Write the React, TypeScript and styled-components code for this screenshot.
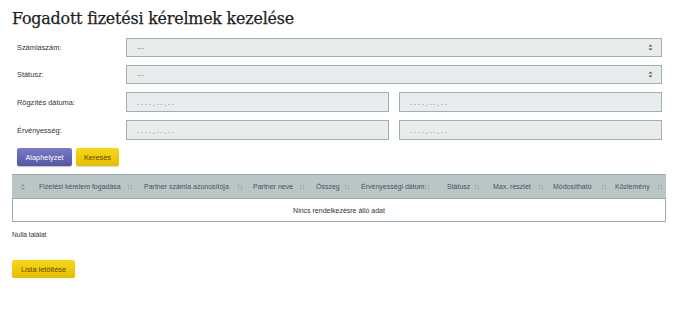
import React from "react";
import styled, { createGlobalStyle } from "styled-components";

const Global = createGlobalStyle`
  html, body { margin: 0; padding: 0; background: #fff; }
  body { font-family: "Liberation Sans", Arial, sans-serif; }
`;

const Page = styled.div`
  padding: 0 12px;
  width: 654px;
`;

const Title = styled.h1`
  margin: 0;
  padding-top: 9px;
  height: 29px;
  font-family: "DejaVu Serif", "Liberation Serif", serif;
  font-weight: normal;
  font-size: 15.9px;
  line-height: 20px;
  color: #1e1e1e;
  letter-spacing: -0.2px;
  -webkit-text-stroke: 0.25px #1e1e1e;
`;

const Form = styled.div`
  display: grid;
  grid-template-columns: 114px 1fr;
  row-gap: 8px;
  width: 650px;
  align-items: center;
`;

const Label = styled.div`
  padding-left: 5px;
  font-size: 7.4px;
  color: #333;
`;

const SelectBox = styled.div`
  height: 19px;
  box-sizing: border-box;
  border: 1px solid #9fb0ae;
  background: #e9ecec;
  display: flex;
  align-items: center;
  justify-content: space-between;
  padding: 0 8px 0 10px;
  font-size: 7px;
  color: #8a8a8a;
`;

const DatePair = styled.div`
  display: grid;
  grid-template-columns: 1fr 1fr;
  column-gap: 10px;
`;

const DateBox = styled.div`
  height: 20px;
  box-sizing: border-box;
  border: 1px solid #9fb0ae;
  background: #e9ecec;
  display: flex;
  align-items: center;
  padding: 3px 0 0 10px;
  font-size: 7px;
  letter-spacing: 1.6px;
  color: #b2babd;
  font-weight: bold;
`;

const Dot = styled.span<{ $c: string }>`
  color: ${(p) => p.$c};
`;

const ButtonRow = styled.div`
  display: flex;
  gap: 4px;
  margin: 8px 0 0 5px;
`;

const Button = styled.button<{ $variant: "blue" | "yellow"; $w: number }>`
  height: 18px;
  width: ${(p) => p.$w}px;
  border: none;
  border-radius: 2px;
  padding: 0;
  font-family: "Liberation Sans", Arial, sans-serif;
  font-size: 7.4px;
  cursor: pointer;
  background: ${(p) =>
    p.$variant === "blue"
      ? "linear-gradient(#7a7ac8, #5656a6)"
      : "linear-gradient(#f7d819, #e6bd00)"};
  color: ${(p) => (p.$variant === "blue" ? "#ffffff" : "#5e4800")};
  box-shadow: ${(p) =>
    p.$variant === "blue" ? "0 1px 1px rgba(0,0,0,0.25)" : "0 1px 1px rgba(0,0,0,0.15)"};
`;

const Table = styled.div`
  margin-top: 8px;
  border: 1px solid #9aabaa;
  width: 654px;
  box-sizing: border-box;
`;

const HeadRow = styled.div`
  display: flex;
  height: 23px;
  background: #b9c6c5;
  border-bottom: 1px solid #9aabaa;
  margin: 0 -1px;
`;

const HeadCell = styled.div<{ $w: number; $pr: number }>`
  width: ${(p) => p.$w}px;
  flex: none;
  display: flex;
  align-items: center;
  box-sizing: border-box;
  padding: 0 ${(p) => p.$pr}px 0 8px;
  font-size: 7px;
  color: #45526a;
  white-space: nowrap;
`;

const FirstCell = styled.div`
  width: 19px;
  flex: none;
  display: flex;
  align-items: center;
  padding-left: 9px;
  box-sizing: border-box;
`;

const SortIcon = styled.svg`
  margin-left: auto;
  flex: none;
`;

const EmptyRow = styled.div`
  height: 22px;
  display: flex;
  align-items: center;
  justify-content: center;
  font-size: 7px;
  color: #333;
`;

const Count = styled.div`
  margin-top: 8px;
  font-size: 6.6px;
  color: #333;
  height: 10px;
  line-height: 10px;
`;

const BottomRow = styled.div`
  margin-top: 20px;
  display: flex;
`;

const Arrows = () => (
  <svg width="5" height="7" viewBox="0 0 5 7">
    <path d="M2.5 0.5 L4.5 2.6 L0.5 2.6 Z" fill="#555" />
    <path d="M2.5 6.5 L4.5 4.4 L0.5 4.4 Z" fill="#555" />
  </svg>
);

const Sort = () => (
  <SortIcon width="6" height="6" viewBox="0 0 6 6">
    <path d="M1.5 5.5 V1 M0.5 2 L1.5 0.8 L2.5 2" stroke="#98abab" strokeWidth="0.7" fill="none" />
    <path d="M4.5 0.5 V5 M3.5 4 L4.5 5.2 L5.5 4" stroke="#98abab" strokeWidth="0.7" fill="none" />
  </SortIcon>
);

const columns: { label: string; w: number; pr: number }[] = [
  { label: "Fizetési kérelem fogadása", w: 105, pr: 3 },
  { label: "Partner számla azonosítója", w: 109, pr: 2 },
  { label: "Partner neve", w: 63, pr: 3 },
  { label: "Összeg", w: 45, pr: 3 },
  { label: "Érvényességi dátum", w: 86, pr: 10 },
  { label: "Státusz", w: 46, pr: 5 },
  { label: "Max. részlet", w: 60, pr: 1 },
  { label: "Módosítható", w: 62, pr: 0 },
  { label: "Közlemény", w: 59, pr: 3 },
];

const DatePlaceholder = () => (
  <DateBox>
    ----<Dot $c="#7a9ab0">.</Dot>--<Dot $c="#c09090">.</Dot>--
  </DateBox>
);

export default function App() {
  return (
    <>
      <Global />
      <Page>
        <Title>Fogadott fizetési kérelmek kezelése</Title>
        <Form>
          <Label>Számlaszám:</Label>
          <SelectBox>
            <span>---</span>
            <Arrows />
          </SelectBox>
          <Label>Státusz:</Label>
          <SelectBox>
            <span>---</span>
            <Arrows />
          </SelectBox>
          <Label>Rögzítés dátuma:</Label>
          <DatePair>
            <DatePlaceholder />
            <DatePlaceholder />
          </DatePair>
          <Label>Érvényesség:</Label>
          <DatePair>
            <DatePlaceholder />
            <DatePlaceholder />
          </DatePair>
        </Form>
        <ButtonRow>
          <Button $variant="blue" $w={55}>Alaphelyzet</Button>
          <Button $variant="yellow" $w={43}>Keresés</Button>
        </ButtonRow>
        <Table>
          <HeadRow>
            <FirstCell>
              <svg width="4" height="6" viewBox="0 0 4 6">
                <path d="M0.5 2.3 L2 0.8 L3.5 2.3" stroke="#5c68a8" strokeWidth="0.8" fill="none" />
                <path d="M0.5 3.7 L2 5.2 L3.5 3.7" stroke="#5c68a8" strokeWidth="0.8" fill="none" />
              </svg>
            </FirstCell>
            {columns.map((c) => (
              <HeadCell key={c.label} $w={c.w} $pr={c.pr}>
                {c.label}
                <Sort />
              </HeadCell>
            ))}
          </HeadRow>
          <EmptyRow>Nincs rendelkezésre álló adat</EmptyRow>
        </Table>
        <Count>Nulla találat</Count>
        <BottomRow>
          <Button $variant="yellow" $w={63}>Lista letöltése</Button>
        </BottomRow>
      </Page>
    </>
  );
}
